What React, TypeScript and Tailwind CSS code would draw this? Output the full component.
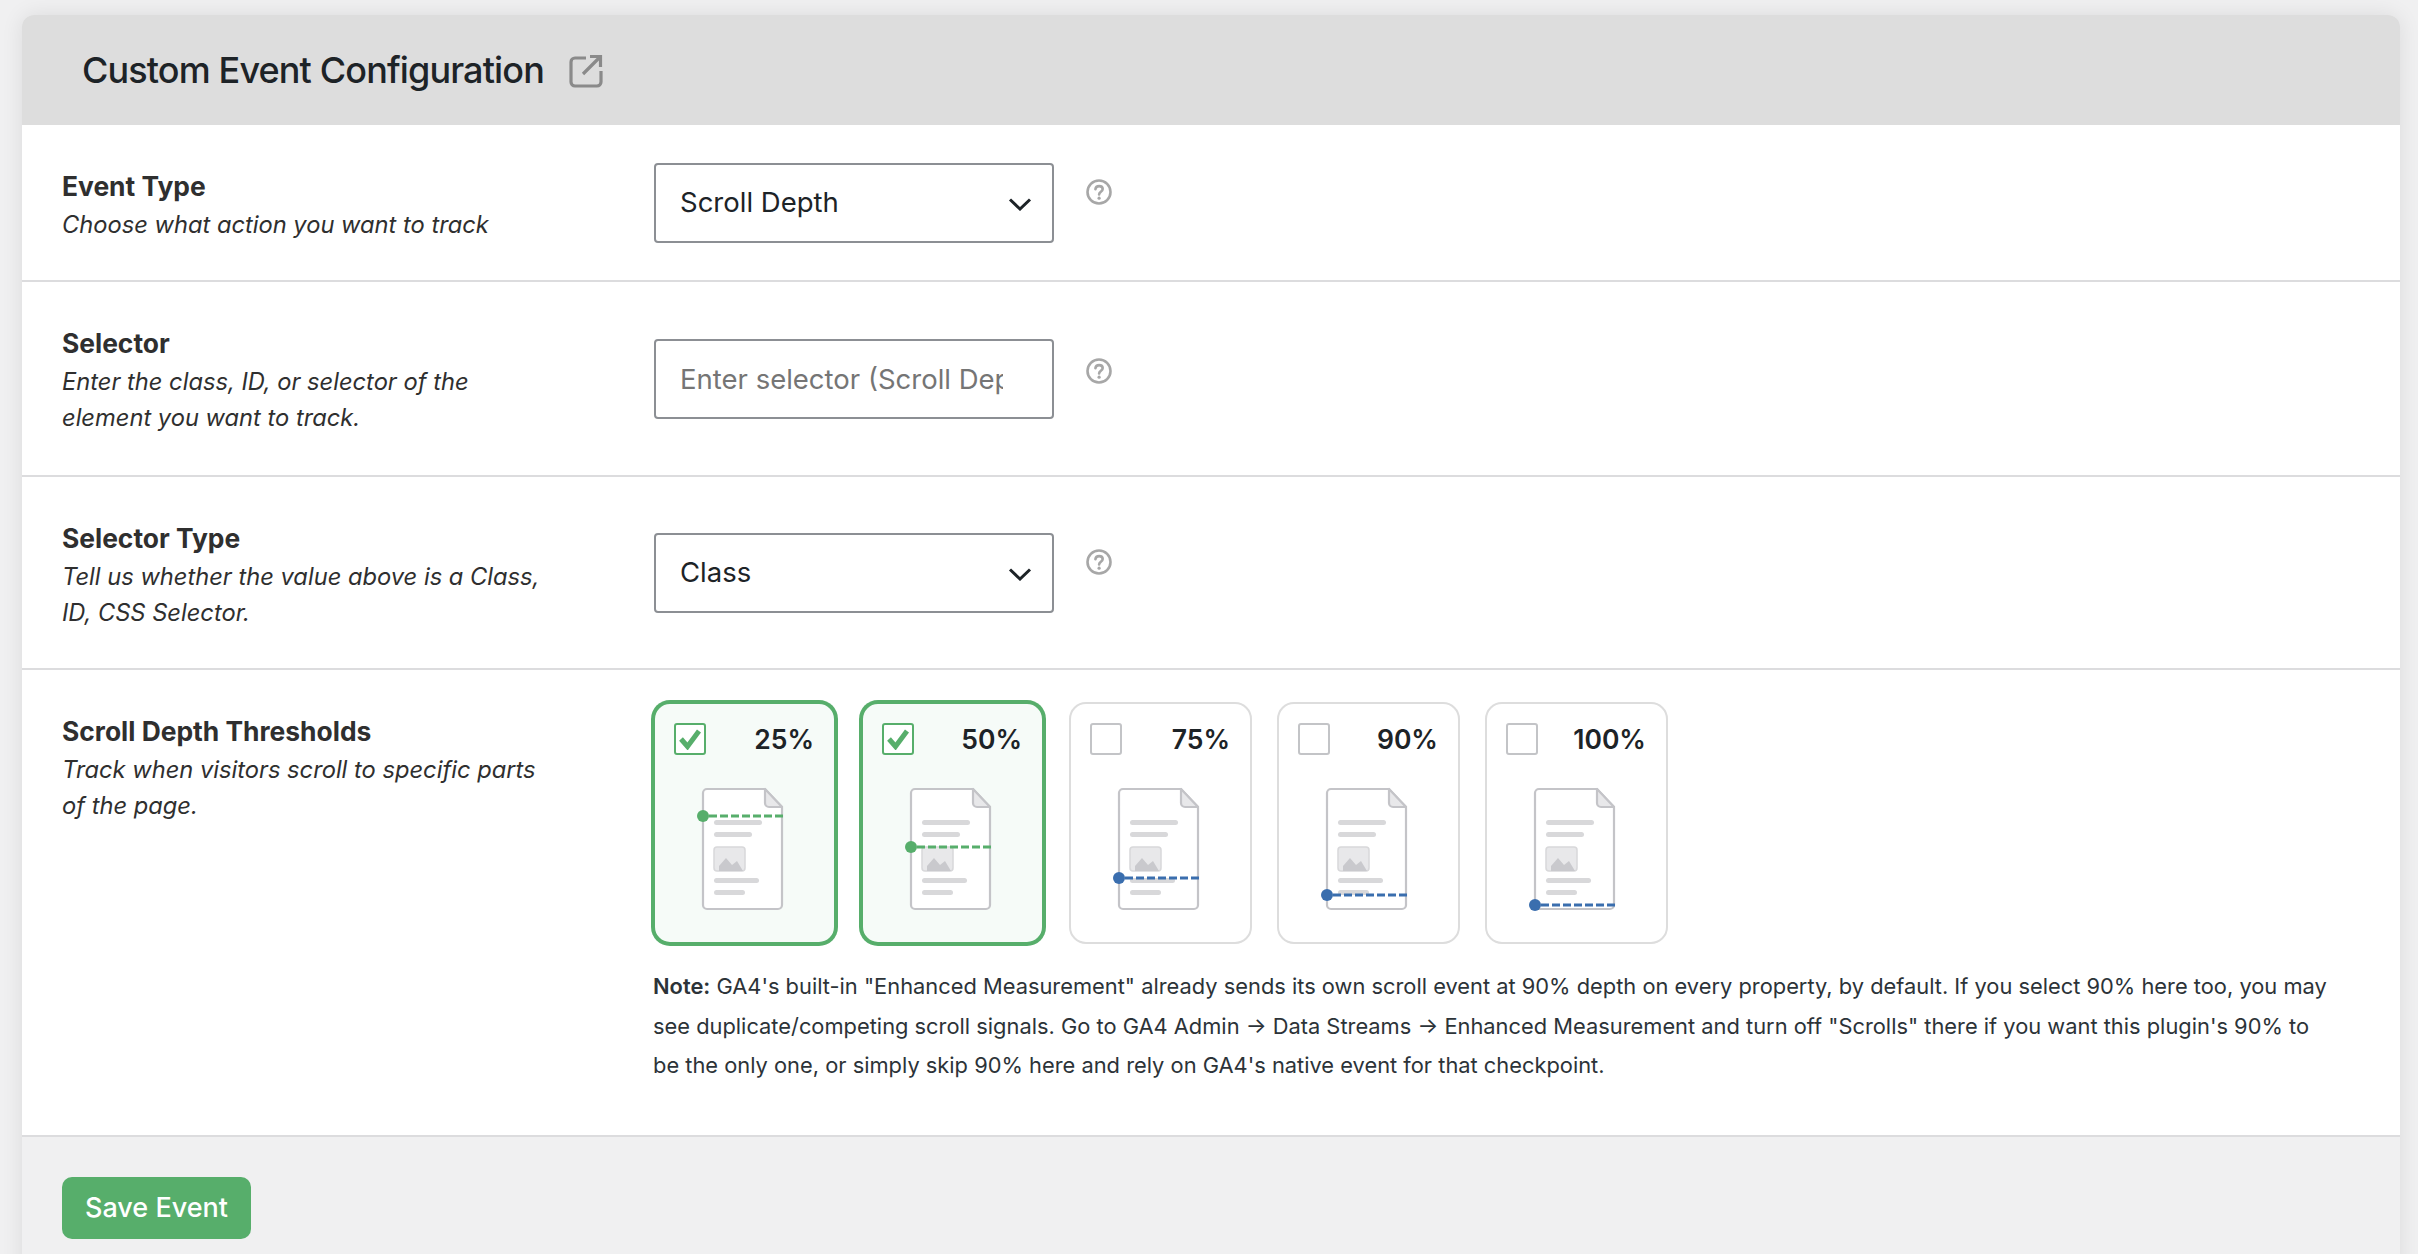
import React from 'react';

const FONT = "font-['Inter','Liberation_Sans',sans-serif]";

const Help = () => (
  <svg width="26" height="26" viewBox="0 0 26 26" fill="none" className="shrink-0">
    <circle cx="13" cy="13" r="11.5" stroke="#a7a7a7" strokeWidth="2.6" />
    <path d="M9.4 10.2c.3-2 1.8-3.1 3.7-3.1 2.1 0 3.6 1.3 3.6 3 0 2.6-3.6 2.7-3.6 5.3" stroke="#a7a7a7" strokeWidth="2.6" strokeLinecap="round" />
    <circle cx="13.1" cy="19.2" r="1.6" fill="#a7a7a7" />
  </svg>
);

const Chevron = () => (
  <svg width="24" height="14" viewBox="0 0 24 14" fill="none" className="absolute right-[22px] top-[34px] pointer-events-none">
    <path d="M2 2.5l10 9.5 10-9.5" stroke="#1d2327" strokeWidth="3" />
  </svg>
);

const FieldLabel = ({ title, desc }: { title: string; desc: React.ReactNode }) => (
  <div className="w-[632px] shrink-0 pl-10">
    <div className="text-[26.4px] leading-[30px] font-bold text-[#2f2f2f] pt-[1px]">{title}</div>
    <div className="mt-[6px] text-[23.7px] leading-[36px] italic text-[#2f2f2f]">{desc}</div>
  </div>
);

const SelectBox = ({ value, options }: { value: string; options: string[] }) => (
  <div className="relative w-[400px] h-[80px]">
    <select
      defaultValue={value}
      className="w-full h-full appearance-none bg-white border-2 border-[#8c8f94] rounded-[4px] pl-[24px] pr-12 text-[27.5px] text-[#1d2327] outline-none"
    >
      {options.map((o) => (
        <option key={o}>{o}</option>
      ))}
    </select>
    <Chevron />
  </div>
);

const DocArt = ({ y, color }: { y: number; color: string }) => (
  <svg width="96" height="130" viewBox="0 0 96 130" fill="none" className="ml-[42px] mt-[29px] block">
    <path d="M10 5H68L85 23V121a4 4 0 0 1-4 4H10a4 4 0 0 1-4-4V9a4 4 0 0 1 4-4Z" fill="#fff" stroke="#c4c4c8" strokeWidth="2.2" />
    <path d="M68 5V19a4 4 0 0 0 4 4H85Z" fill="#e8e8ea" stroke="#c4c4c8" strokeWidth="2.2" strokeLinejoin="round" />
    <rect x="17" y="36" width="48" height="5" rx="2.5" fill="#d8d8da" />
    <rect x="17" y="48" width="38" height="5" rx="2.5" fill="#d8d8da" />
    <rect x="17" y="63" width="31" height="24" rx="3" fill="#e8e8ea" stroke="#d8d8da" strokeWidth="1.5" />
    <path d="M22 87V82L29 74L35 81L40 77L46 87Z" fill="#c9c9cd" />
    <rect x="17" y="94" width="45" height="5" rx="2.5" fill="#d8d8da" />
    <rect x="17" y="106" width="31" height="5" rx="2.5" fill="#d8d8da" />
    <line x1="12" y1={y} x2="88" y2={y} stroke={color} strokeWidth="3" strokeDasharray="8 3" />
    <circle cx="6" cy={y} r="6" fill={color} />
  </svg>
);

const THRESHOLDS = [
  { label: '25%', y: 32, checked: true },
  { label: '50%', y: 63, checked: true },
  { label: '75%', y: 94, checked: false },
  { label: '90%', y: 111, checked: false },
  { label: '100%', y: 121, checked: false },
];

const ThresholdCard = ({ label, y, checked }: { label: string; y: number; checked: boolean }) => (
  <div
    className={
      checked
        ? 'w-[183px] h-[242px] rounded-[17px] border-2 border-[#57ae6b] ring-2 ring-[#57ae6b] bg-[#f6fbf8]'
        : 'w-[183px] h-[242px] rounded-[17px] border-2 border-[#dddddd] bg-white'
    }
  >
    <div className="flex items-center justify-between pl-[19px] pr-[20px] pt-[19px]">
      <span
        className={
          checked
            ? 'w-[32px] h-[32px] rounded-[3px] border-2 border-[#57ae6b] bg-white flex items-center justify-center'
            : 'w-[32px] h-[32px] rounded-[3px] border-2 border-[#c3c4c7] bg-white'
        }
      >
        {checked && (
          <svg width="24" height="22" viewBox="0 0 24 22" fill="none">
            <path d="M3 11l6.5 7.5L21 3" stroke="#57ae6b" strokeWidth="5" />
          </svg>
        )}
      </span>
      <span className="text-[26.5px] leading-[32px] font-semibold text-[#1d2327]">{label}</span>
    </div>
    <DocArt y={y} color={checked ? '#57ae6b' : '#3a6eae'} />
  </div>
);

export default function App() {
  return (
    <div className={`${FONT} h-[1254px] overflow-hidden bg-[#f0f0f1] pl-[22px] pr-[18px] pt-[15px]`}>
      <div className="h-[1300px] rounded-t-[12px] overflow-hidden shadow-[0_0_22px_rgba(0,0,0,0.09)]">
        <div className="h-[110px] bg-[#dddddd] flex items-center pl-[60px] pb-[1px]">
          <h2 className="text-[36px] font-medium tracking-[-0.87px] text-[#1d2327] leading-none">Custom Event Configuration</h2>
          <svg width="34" height="34" viewBox="0 0 34 34" fill="none" className="ml-[25px] mt-[2px]">
            <path d="M17 4H6a4 4 0 0 0-4 4v20a4 4 0 0 0 4 4h22a4 4 0 0 0 4-4V17" stroke="#8a8a8a" strokeWidth="3.2" />
            <path d="M14 20L31 3M21 2.5h10.5V13" stroke="#8a8a8a" strokeWidth="3.2" />
          </svg>
        </div>

        <div className="h-[157px] bg-white border-b-2 border-[#dcdcde] flex pt-[45px]">
          <FieldLabel title="Event Type" desc="Choose what action you want to track" />
          <div className="flex items-start gap-[32px] -mt-[7px]">
            <SelectBox value="Scroll Depth" options={['Scroll Depth', 'Click', 'Form Submit']} />
            <div className="mt-[16px]">
              <Help />
            </div>
          </div>
        </div>

        <div className="h-[195px] bg-white border-b-2 border-[#dcdcde] flex pt-[45px]">
          <FieldLabel
            title="Selector"
            desc={
              <>
                Enter the class, ID, or selector of the
                <br />
                element you want to track.
              </>
            }
          />
          <div className="flex items-start gap-[32px] mt-[12px]">
            <input
              placeholder="Enter selector (Scroll Depth only)"
              className="w-[400px] h-[80px] bg-white border-2 border-[#8c8f94] rounded-[4px] pl-[24px] pr-[49px] text-[27.5px] text-[#1d2327] placeholder:text-[#757575] outline-none"
            />
            <div className="mt-[19px]">
              <Help />
            </div>
          </div>
        </div>

        <div className="h-[193px] bg-white border-b-2 border-[#dcdcde] flex pt-[45px]">
          <FieldLabel
            title="Selector Type"
            desc={
              <>
                Tell us whether the value above is a Class,
                <br />
                ID, CSS Selector.
              </>
            }
          />
          <div className="flex items-start gap-[32px] mt-[11px]">
            <SelectBox value="Class" options={['Class', 'ID', 'CSS Selector']} />
            <div className="mt-[16px]">
              <Help />
            </div>
          </div>
        </div>

        <div className="h-[467px] bg-white border-b-2 border-[#dcdcde] flex pt-[45px]">
          <FieldLabel
            title="Scroll Depth Thresholds"
            desc={
              <>
                Track when visitors scroll to specific parts
                <br />
                of the page.
              </>
            }
          />
          <div className="-mt-[13px] -ml-[1px] flex-1 min-w-0">
            <div className="flex gap-[25px]">
              {THRESHOLDS.map((t) => (
                <ThresholdCard key={t.label} {...t} />
              ))}
            </div>
            <p className="mt-[23px] pr-[68px] text-[21.85px] leading-[39.6px] text-[#2c3338]">
              <strong className="font-semibold">Note:</strong> GA4's built-in "Enhanced Measurement" already sends its own scroll event at 90% depth on every property, by default. If you select 90% here too, you may see duplicate/competing scroll signals. Go to GA4 Admin → Data Streams → Enhanced Measurement and turn off "Scrolls" there if you want this plugin's 90% to be the only one, or simply skip 90% here and rely on GA4's native event for that checkpoint.
            </p>
          </div>
        </div>

        <div className="pl-10 pt-[40px]">
          <button className="w-[189px] h-[62px] rounded-[10px] bg-[#57ae6b] text-white text-[27px] font-medium">Save Event</button>
        </div>
      </div>
    </div>
  );
}
